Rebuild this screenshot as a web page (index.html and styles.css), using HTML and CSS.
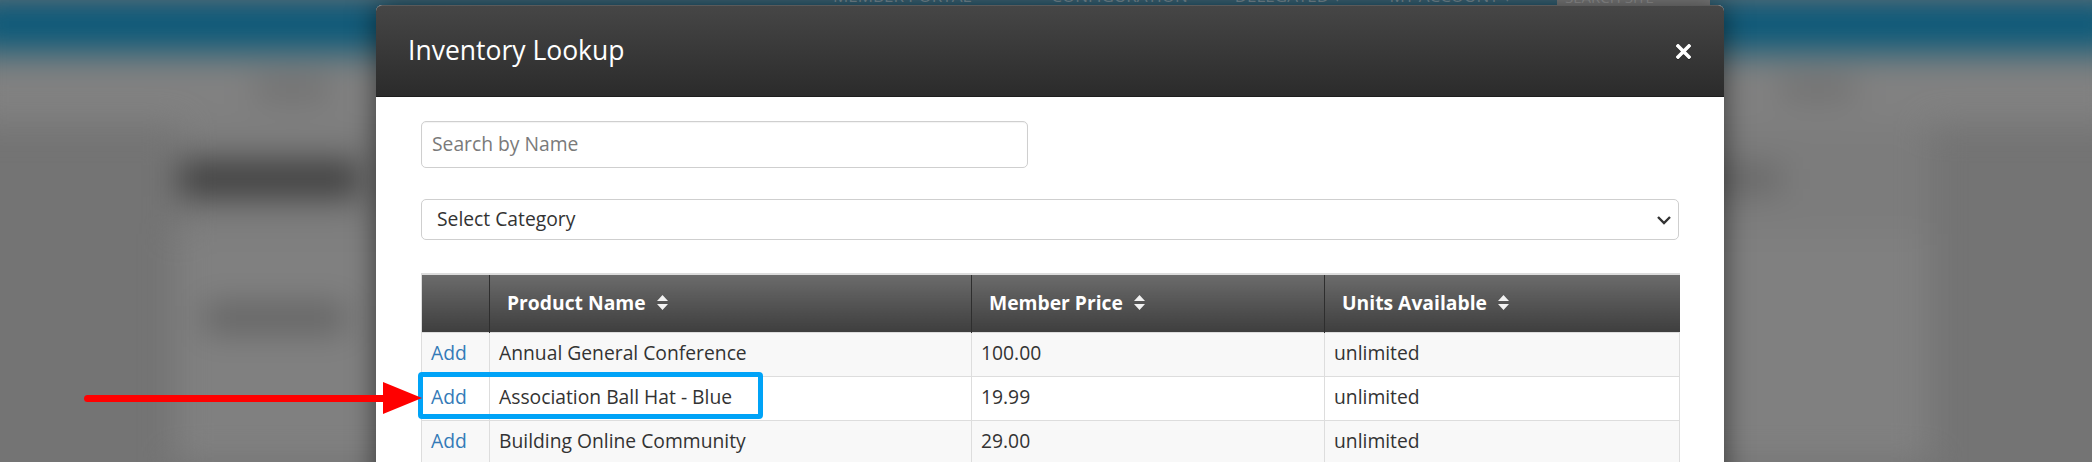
FILE: index.html
```html
<!DOCTYPE html>
<html>
<head>
<meta charset="utf-8">
<title>Inventory Lookup</title>
<link rel="stylesheet" href="styles.css">
</head>
<body>
<div class="backdrop">
  <div class="bg-blur">
    <div class="bg-nav"></div>
    <div class="bg-subnav"><span class="bg-sub-a"></span><span class="bg-sub-b"></span></div>
    <div class="bg-main">
      <div class="bg-head"><span class="bg-title"></span><span class="bg-btn"></span></div>
      <div class="bg-panel"><span class="bg-label"></span></div>
    </div>
  </div>
  <div class="topnav">
    <span class="tn-item tn-1">MEMBER PORTAL</span>
    <span class="tn-item tn-2">CONFIGURATION</span>
    <span class="tn-item tn-3">DELEGATED ▾</span>
    <span class="tn-item tn-4">MY ACCOUNT ▾</span>
    <span class="tn-box">SEARCH SITE</span>
  </div>
</div>

<div class="modal">
  <div class="modal-header">
    <h4 class="modal-title">Inventory Lookup</h4>
    <button class="close" type="button" aria-label="Close">
      <svg width="15" height="15" viewBox="0 0 15 15"><path d="M2 2 L13 13 M13 2 L2 13" stroke="#fff" stroke-width="3.6" stroke-linecap="square" fill="none"/></svg>
    </button>
  </div>
  <div class="modal-body">
    <div class="search-wrap">
      <input class="form-control search" type="text" placeholder="Search by Name">
    </div>
    <div class="select-wrap">
      <div class="form-control select">
        <span>Select Category</span>
        <svg class="chev" width="16" height="10" viewBox="0 0 16 10"><path d="M2 2 L8 8 L14 2" stroke="#333" stroke-width="2.4" fill="none"/></svg>
      </div>
    </div>
    <table class="grid">
      <colgroup>
        <col class="c1"><col class="c2"><col class="c3"><col class="c4">
      </colgroup>
      <thead>
        <tr>
          <th></th>
          <th><span class="th-in">Product Name <svg class="sort" width="11" height="15" viewBox="0 0 11 15"><path d="M5.5 0 L11 6 L0 6 Z M0 9 L11 9 L5.5 15 Z" fill="#f2f2f2"/></svg></span></th>
          <th><span class="th-in">Member Price <svg class="sort" width="11" height="15" viewBox="0 0 11 15"><path d="M5.5 0 L11 6 L0 6 Z M0 9 L11 9 L5.5 15 Z" fill="#f2f2f2"/></svg></span></th>
          <th><span class="th-in">Units Available <svg class="sort" width="11" height="15" viewBox="0 0 11 15"><path d="M5.5 0 L11 6 L0 6 Z M0 9 L11 9 L5.5 15 Z" fill="#f2f2f2"/></svg></span></th>
        </tr>
      </thead>
      <tbody>
        <tr class="odd"><td><a href="#">Add</a></td><td>Annual General Conference</td><td>100.00</td><td>unlimited</td></tr>
        <tr class="even"><td><a href="#">Add</a></td><td>Association Ball Hat - Blue</td><td>19.99</td><td>unlimited</td></tr>
        <tr class="odd"><td><a href="#">Add</a></td><td>Building Online Community</td><td>29.00</td><td>unlimited</td></tr>
      </tbody>
    </table>
  </div>
</div>

<div class="highlight"></div>
<div class="arrow">
  <span class="arrow-line"></span>
  <svg class="arrow-head" width="39" height="32" viewBox="0 0 39 32"><path d="M0 0 L39 16 L0 32 Z" fill="#ff0000"/></svg>
</div>
</body>
</html>
```
FILE: styles.css
```css
html, body {
  margin: 0;
  padding: 0;
  width: 2092px;
  height: 462px;
  overflow: hidden;
  font-family: "Open Sans", "Liberation Sans", sans-serif;
  background: #767676;
}

/* ---------- dimmed, blurred page behind the modal ---------- */
.backdrop {
  position: absolute;
  inset: 0;
  overflow: hidden;
  background: #747474;
}
.bg-blur {
  display: flex;
  flex-direction: column;
  height: 100%;
  filter: blur(16px);
  margin: -30px -30px 0;
  padding-top: 30px;
}
.bg-nav {
  height: 54px;
  background: linear-gradient(#02557a, #0b5a7a 60%, #2a6276);
  flex: none;
}
.bg-subnav {
  height: 70px;
  background: #818181;
  flex: none;
  display: flex;
  align-items: center;
  padding-left: 285px;
  gap: 1450px;
}
.bg-sub-a, .bg-sub-b {
  display: block;
  width: 75px;
  height: 16px;
  background: #686868;
}
.bg-main {
  flex: 1;
  margin-left: 210px;
  width: 1750px;
  background: #7c7c7c;
  display: flex;
  flex-direction: column;
}
.bg-head {
  height: 110px;
  display: flex;
  align-items: center;
  justify-content: space-between;
  padding: 0 150px 0 0;
}
.bg-title {
  display: block;
  width: 180px;
  height: 36px;
  background: #3e3e3e;
  margin-left: 0;
}
.bg-btn {
  display: block;
  width: 110px;
  height: 26px;
  background: #666;
}
.bg-panel {
  flex: 1;
  margin: 0 0 0 -5px;
  background: #808080;
  padding: 70px 0 0 30px;
}
.bg-label {
  display: block;
  width: 140px;
  height: 28px;
  background: #626262;
}

.topnav {
  position: absolute;
  top: -15px;
  left: 0;
  display: flex;
  align-items: center;
  height: 20px;
  font-family: "Open Sans", sans-serif;
  font-size: 17px;
  color: #7a8f99;
  white-space: nowrap;
}
.tn-1 { margin-left: 833px; }
.tn-2 { margin-left: 80px; }
.tn-3 { margin-left: 47px; }
.tn-4 { margin-left: 47px; }
.tn-box {
  margin-left: 45px;
  width: 153px;
  height: 34px;
  margin-top: -6px;
  background: #7e7e7e;
  color: #9a9a9a;
  font-size: 15px;
  padding-left: 8px;
  box-sizing: border-box;
  line-height: 44px;
}

/* ---------- modal ---------- */
.modal {
  position: absolute;
  left: 376px;
  top: 5px;
  width: 1348px;
  height: 520px;
  background: #fff;
  border-radius: 6px 6px 0 0;
  box-shadow: 0 0 28px rgba(0, 0, 0, 0.55);
}
.modal-header {
  height: 92px;
  box-sizing: border-box;
  display: flex;
  align-items: center;
  justify-content: space-between;
  padding: 0 32px 0 32px;
  background: linear-gradient(#464646, #2b2b2b);
  border-top: 1px solid #5a5a5a;
  border-bottom: 1px solid #1d1d1d;
  border-radius: 6px 6px 0 0;
}
.modal-title {
  margin: 0;
  font-weight: 400;
  font-size: 26.5px;
  color: #fff;
  line-height: 1;
  padding-bottom: 2px;
}
.close {
  border: 0;
  background: none;
  padding: 0;
  margin-right: 1px;
  display: flex;
  filter: drop-shadow(0 1px 0 rgba(0,0,0,0.4));
}

.modal-body {
  padding: 24px 45px 0 45px;
}
.form-control {
  box-sizing: border-box;
  border: 1px solid #cfcfcf;
  border-radius: 5px;
  font-family: "Open Sans", sans-serif;
  font-size: 19.3px;
  color: #333;
  background: #fff;
}
.search {
  display: block;
  width: 607px;
  height: 47px;
  padding: 0 10px 2px;
  outline: none;
  box-shadow: inset 0 1px 1px rgba(0,0,0,0.05);
}
.search::placeholder {
  color: #7a7a7a;
}
.select-wrap {
  margin-top: 31px;
}
.select {
  height: 41px;
  display: flex;
  align-items: center;
  justify-content: space-between;
  padding: 0 6px 2px 15px;
}
.chev {
  display: block;
  margin-top: 2px;
}

/* ---------- table ---------- */
.grid {
  margin-top: 33px;
  width: 1258px;
  border-collapse: collapse;
  table-layout: fixed;
  font-size: 19.3px;
  color: #333;
}
.c1 { width: 68px; }
.c2 { width: 482px; }
.c3 { width: 353px; }
.c4 { width: 355px; }
.grid thead th {
  height: 58px;
  box-sizing: border-box;
  padding: 0 0 2px 17px;
  text-align: left;
  font-weight: 700;
  color: #fff;
  background: linear-gradient(#6b6b6b, #3e3e3e);
  border-top: 2px solid #dcdcdc;
  border-left: 1px solid #2e2e2e;
}
.grid thead th:first-child {
  border-left: 1px solid #dcdcdc;
}
.th-in {
  display: inline-flex;
  align-items: center;
  gap: 11px;
}
.sort {
  display: block;
}
.grid td {
  height: 44px;
  box-sizing: border-box;
  padding: 0 9px 4px;
  border: 1px solid #dddddd;
  white-space: nowrap;
}
.grid tr.odd td {
  background: #f8f8f8;
}
.grid tr.even td {
  background: #fff;
}
.grid a {
  color: #337ab7;
  text-decoration: none;
}

/* ---------- annotations ---------- */
.highlight {
  position: absolute;
  left: 418px;
  top: 372px;
  width: 345px;
  height: 47px;
  box-sizing: border-box;
  border: 5px solid #00a3f7;
  border-radius: 4px;
}
.arrow {
  position: absolute;
  left: 84px;
  top: 382px;
  display: flex;
  align-items: center;
}
.arrow-line {
  display: block;
  width: 303px;
  height: 7px;
  background: #ff0000;
  border-radius: 4px 0 0 4px;
  margin-right: -4px;
}
.arrow-head {
  display: block;
}
```
